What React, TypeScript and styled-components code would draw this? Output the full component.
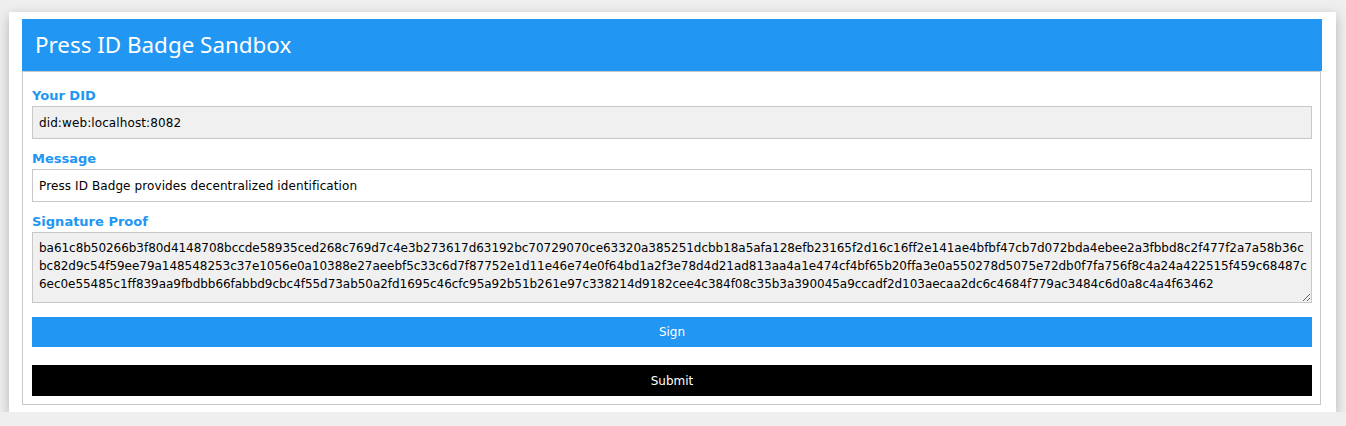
import React, { useState } from 'react'
import styled, { createGlobalStyle } from 'styled-components'

const GlobalStyle = createGlobalStyle`
  body {
    margin: 0;
    background: #efefef;
    font-family: "DejaVu Sans", Verdana, sans-serif;
  }
`

const Card = styled.div`
  margin: 12px 10px 0 9px;
  padding: 7px 14px 7px 13px;
  background: #fff;
  box-shadow: 0 4px 12px rgba(0, 0, 0, 0.25);
`

const Header = styled.header`
  height: 52px;
  padding: 0 13px;
  background: #2196f3;
  color: #fff;
  font-family: "Noto Sans", "Open Sans", sans-serif;
  font-size: 22.4px;
  line-height: 52px;
`

const FormBox = styled.div`
  margin-right: 1px;
  padding: 4px 8px 8px 9px;
  border: 1px solid #c8c8c8;
`

const Label = styled.label`
  display: block;
  margin: 12px 0 2px;
  color: #2196f3;
  font-size: 13px;
  font-weight: bold;
  line-height: 16px;
`

const TextInput = styled.input<{ $readOnly?: boolean }>`
  display: block;
  box-sizing: border-box;
  width: 100%;
  height: 33px;
  padding: 0 6px;
  border: 1px solid #c8c8c8;
  background: ${p => (p.$readOnly ? '#f0f0f0' : '#fff')};
  color: #000;
  font-family: "DejaVu Sans", Verdana, sans-serif;
  font-size: 12px;
  letter-spacing: 0.1px;
  outline: none;
`

// padding/letter-spacing tuned so the hex wraps 174 / 175 / 163 chars
const ProofArea = styled.textarea`
  display: block;
  box-sizing: border-box;
  width: 100%;
  height: 71px;
  padding: 6px 2px 4px 6px;
  border: 1px solid #c8c8c8;
  background: #f0f0f0;
  color: #000;
  font-family: "DejaVu Sans", Verdana, sans-serif;
  font-size: 12px;
  letter-spacing: -0.04px;
  line-height: 18px;
  outline: none;
`

const ActionButton = styled.button<{ $dark?: boolean }>`
  display: block;
  width: 100%;
  height: ${p => (p.$dark ? '31px' : '30px')};
  margin-top: ${p => (p.$dark ? '18px' : '14px')};
  border: none;
  background: ${p => (p.$dark ? '#000' : '#2196f3')};
  color: #fff;
  font-family: "DejaVu Sans", Verdana, sans-serif;
  font-size: 12px;
  cursor: pointer;
`

const proof =
  'ba61c8b50266b3f80d4148708bccde58935ced268c769d7c4e3b273617d63192bc70729070ce63320a385251dcbb18a5afa128efb23165f2d16c16ff2e141ae4bfbf47cb7d072bda4ebee2a3fbbd8c2f477f2a7a58b36c' +
  'bc82d9c54f59ee79a148548253c37e1056e0a10388e27aeebf5c33c6d7f87752e1d11e46e74e0f64bd1a2f3e78d4d21ad813aa4a1e474cf4bf65b20ffa3e0a550278d5075e72db0f7fa756f8c4a24a422515f459c68487c' +
  '6ec0e55485c1ff839aa9fbdbb66fabbd9cbc4f55d73ab50a2fd1695c46cfc95a92b51b261e97c338214d9182cee4c384f08c35b3a390045a9ccadf2d103aecaa2dc6c4684f779ac3484c6d0a8c4a4f63462'

export default function App() {
  const [message, setMessage] = useState('Press ID Badge provides decentralized identification')
  const [signature, setSignature] = useState(proof)

  return (
    <>
      <GlobalStyle />
      <Card>
        <Header>Press ID Badge Sandbox</Header>
        <FormBox>
          <Label>Your DID</Label>
          <TextInput $readOnly readOnly value='did:web:localhost:8082' />
          <Label>Message</Label>
          <TextInput value={message} onChange={e => setMessage(e.target.value)} />
          <Label>Signature Proof</Label>
          <ProofArea value={signature} onChange={e => setSignature(e.target.value)} />
          <ActionButton>Sign</ActionButton>
          <ActionButton $dark>Submit</ActionButton>
        </FormBox>
      </Card>
    </>
  )
}
